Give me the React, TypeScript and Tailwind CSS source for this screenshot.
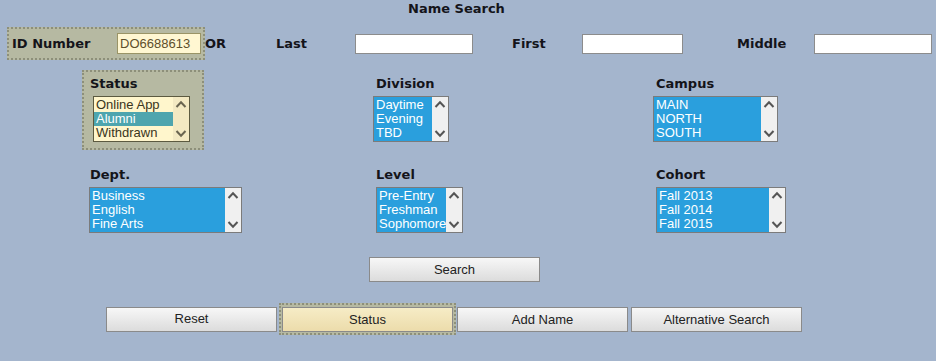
import React from "react";

const labelCls = "font-['DejaVu_Sans',sans-serif] font-bold text-[13px] text-[#14141a]";

function Chevrons({ color = "#555" }: { color?: string }) {
  return (
    <div className="flex flex-col justify-between items-center h-full py-[3px]">
      <svg width="12" height="9" viewBox="0 0 12 9">
        <path d="M1.5 7 L6 2.2 L10.5 7" fill="none" stroke={color} strokeWidth="2" />
      </svg>
      <svg width="12" height="9" viewBox="0 0 12 9">
        <path d="M1.5 2 L6 6.8 L10.5 2" fill="none" stroke={color} strokeWidth="2" />
      </svg>
    </div>
  );
}

function ListBox({
  items,
  width,
  selected,
  cream = false,
}: {
  items: string[];
  width: string;
  selected?: number;
  cream?: boolean;
}) {
  return (
    <div
      className={`${width} h-[46px] flex border ${
        cream ? "border-[#5c5a40] bg-[#fff6cc]" : "border-[#7b7b7b] bg-[#2a9fdd]"
      } font-['Liberation_Sans',Arial,sans-serif] text-[13px] leading-[14px]`}
    >
      <div className="flex-1 flex flex-col pt-[1px] overflow-hidden">
        {items.map((it, i) => (
          <div
            key={it}
            className={`h-[14px] pl-[2px] whitespace-nowrap ${
              cream
                ? i === selected
                  ? "bg-[#4ea5ae] text-white"
                  : "text-[#3a3520]"
                : "text-white"
            }`}
          >
            {it}
          </div>
        ))}
      </div>
      <div className={`w-[16px] ${cream ? "bg-[#f3e9c2]" : "bg-[#f0f0f0]"}`}>
        <Chevrons color={cream ? "#6a6550" : "#555"} />
      </div>
    </div>
  );
}

function Field({
  label,
  items,
  width,
  labelPad,
}: {
  label: string;
  items: string[];
  width: string;
  labelPad: string;
}) {
  return (
    <div className="flex flex-col gap-[5px]">
      <div className={`${labelCls} ${labelPad} leading-[14px]`}>{label}</div>
      <ListBox items={items} width={width} />
    </div>
  );
}

function Btn({ children, active = false }: { children: React.ReactNode; active?: boolean }) {
  return (
    <button
      className={`w-[171px] h-[25px] border border-[#8a8a8a] text-[13px] text-[#222] font-['Liberation_Sans',Arial,sans-serif] ${
        active
          ? "bg-gradient-to-b from-[#f6ecc6] to-[#ecdcab]"
          : "bg-gradient-to-b from-[#f7f7f7] to-[#dcdcdc]"
      }`}
    >
      {children}
    </button>
  );
}

export default function App() {
  return (
    <div className="w-[936px] h-[361px] bg-[#a4b5cd] overflow-hidden">
      <div className={`${labelCls} pt-[1px] leading-[16px] pl-[408px]`}>Name Search</div>

      {/* ID / name row */}
      <div className="flex items-center mt-[10px] pl-[7px]">
        <div className="w-[198px] h-[33px] flex items-center border-2 border-dotted border-[#8d8f7a] bg-[#b6b9a2]">
          <span className={`${labelCls} pl-[3px] w-[108px] text-[#2a2814]`}>ID Number</span>
          <div className="w-[84px] h-[21px] border border-[#9a9466] bg-[#fff7d2] text-[13px] leading-[19px] text-[#5e4f2c] pl-[2px] font-['Liberation_Sans',Arial,sans-serif]">
            DO6688613
          </div>
        </div>
        <span className={`${labelCls} w-[71px]`}>OR</span>
        <span className={`${labelCls} w-[79px]`}>Last</span>
        <div className="w-[118px] h-[20px] bg-white border border-[#8c8c8c]" />
        <span className={`${labelCls} ml-[39px] w-[70px]`}>First</span>
        <div className="w-[101px] h-[20px] bg-white border border-[#8c8c8c]" />
        <span className={`${labelCls} ml-[54px] w-[77px]`}>Middle</span>
        <div className="w-[118px] h-[20px] bg-white border border-[#8c8c8c]" />
      </div>

      {/* list rows */}
      <div className="grid grid-cols-[291px_280px_1fr] pl-[82px] mt-[10px]">
        <div className="w-[122px] h-[80px] border-2 border-dotted border-[#8d8f7a] bg-[#b6b9a2] pl-[6px] pt-[5px] flex flex-col gap-[5px]">
          <div className={`${labelCls} text-[#2a2814] leading-[14px]`}>Status</div>
          <div className="pl-[3px]">
            <ListBox items={["Online App", "Alumni", "Withdrawn"]} width="w-[97px]" selected={1} cream />
          </div>
        </div>
        <div className="pt-[7px]">
          <Field label="Division" items={["Daytime", "Evening", "TBD"]} width="w-[76px]" labelPad="pl-[3px]" />
        </div>
        <div className="pt-[7px]">
          <Field label="Campus" items={["MAIN", "NORTH", "SOUTH"]} width="w-[125px]" labelPad="pl-[3px]" />
        </div>
      </div>

      <div className="grid grid-cols-[287px_280px_1fr] pl-[89px] mt-[18px]">
        <Field label="Dept." items={["Business", "English", "Fine Arts"]} width="w-[153px]" labelPad="pl-[1px]" />
        <Field label="Level" items={["Pre-Entry", "Freshman", "Sophomore"]} width="w-[87px]" labelPad="pl-0" />
        <Field label="Cohort" items={["Fall 2013", "Fall 2014", "Fall 2015"]} width="w-[130px]" labelPad="pl-0" />
      </div>

      <div className="flex pl-[369px] mt-[24px]">
        <Btn>Search</Btn>
      </div>

      <div className="flex items-center pl-[106px] mt-[21px]">
        <Btn>Reset</Btn>
        <div className="ml-[2px] border-2 border-dotted border-[#8d8f7a] p-[1px] bg-[#b6b9a2]">
          <Btn active>Status</Btn>
        </div>
        <div className="ml-[1px]">
          <Btn>Add Name</Btn>
        </div>
        <div className="ml-[3px]">
          <Btn>Alternative Search</Btn>
        </div>
      </div>
    </div>
  );
}
